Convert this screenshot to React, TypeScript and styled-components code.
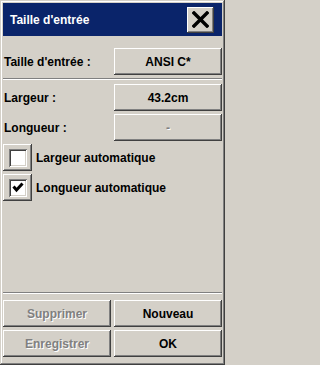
import React, { useState } from "react";
import styled, { createGlobalStyle, css } from "styled-components";

const GlobalStyle = createGlobalStyle`
  html, body {
    margin: 0;
    padding: 0;
    background: #d4d0c8;
  }
  * {
    box-sizing: border-box;
  }
`;

const raised = css`
  background: #d4d0c8;
  box-shadow: inset -1px -1px #404040, inset 1px 1px #ffffff,
    inset -2px -2px #808080, inset 2px 2px #d4d0c8;
`;

const StyleWindow = styled.div`
  width: 225px;
  height: 365px;
  padding: 3px;
  display: flex;
  flex-direction: column;
  background: #d4d0c8;
  box-shadow: inset -1px -1px #404040, inset 1px 1px #d4d0c8,
    inset -2px -2px #808080, inset 2px 2px #ffffff;
  font-family: "Liberation Sans", Arial, sans-serif;
  font-weight: bold;
  font-size: 12px;
  color: #000;
`;

const StyleTitleBar = styled.div`
  height: 33px;
  flex: none;
  display: flex;
  align-items: center;
  justify-content: space-between;
  padding: 0 8px 0 7px;
  background: #0a246a;
  color: #ffffff;
  font-size: 12px;
`;

const StyleCloseButton = styled.button`
  ${raised};
  width: 27px;
  height: 26px;
  border: none;
  padding: 0;
  display: flex;
  align-items: center;
  justify-content: center;
  cursor: pointer;
`;

const StyleBody = styled.div`
  flex: 1;
  display: flex;
  flex-direction: column;
  padding: 12px 0 5px 0;
`;

const StyleRow = styled.div`
  display: grid;
  grid-template-columns: 1fr 1fr;
  column-gap: 3px;
  align-items: center;
  height: 27px;
  & + & {
    margin-top: 3px;
  }
`;

const StyleLabel = styled.span`
  padding-left: 1px;
  white-space: nowrap;
`;

const StyleButton = styled.button<{ $disabled?: boolean }>`
  ${raised};
  height: 27px;
  border: none;
  padding: 0;
  font-family: inherit;
  font-weight: bold;
  font-size: 12px;
  color: ${(p) => (p.$disabled ? "#808080" : "#000")};
  text-shadow: ${(p) => (p.$disabled ? "1px 1px 0 #ffffff" : "none")};
  cursor: ${(p) => (p.$disabled ? "default" : "pointer")};
`;

const StyleSeparator = styled.hr<{ $top: number; $bottom: number }>`
  width: 100%;
  height: 2px;
  border: none;
  margin: ${(p) => p.$top}px 0 ${(p) => p.$bottom}px 0;
  border-top: 1px solid #808080;
  border-bottom: 1px solid #ffffff;
`;

const StyleCheckRow = styled.label`
  display: flex;
  align-items: center;
  gap: 4px;
  height: 27px;
  margin-top: 3px;
  cursor: pointer;
`;

const StyleCheckFrame = styled.span`
  ${raised};
  width: 29px;
  height: 27px;
  display: flex;
  align-items: center;
  justify-content: center;
`;

const StyleCheckBox = styled.span`
  width: 18px;
  height: 18px;
  background: #ffffff;
  display: flex;
  align-items: center;
  justify-content: center;
  box-shadow: inset 1px 1px #808080, inset -1px -1px #ffffff,
    inset 2px 2px #404040, inset -2px -2px #d4d0c8;
`;

const StyleSpacer = styled.div`
  flex: 1;
`;

const StyleFooter = styled.div`
  display: grid;
  grid-template-columns: 1fr 1fr;
  gap: 3px;
`;

function CheckOption({ label, checked, onToggle }: { label: string; checked: boolean; onToggle: () => void }) {
  return (
    <StyleCheckRow onClick={onToggle}>
      <StyleCheckFrame>
        <StyleCheckBox>
          {checked && (
            <svg width="12" height="11" viewBox="0 0 12 11">
              <path d="M1.5 4.5 L4.5 8 L10.5 1.5" fill="none" stroke="#000" strokeWidth="3" />
            </svg>
          )}
        </StyleCheckBox>
      </StyleCheckFrame>
      <span>{label}</span>
    </StyleCheckRow>
  );
}

export default function App() {
  const [autoWidth, setAutoWidth] = useState(false);
  const [autoLength, setAutoLength] = useState(true);

  return (
    <>
      <GlobalStyle />
      <StyleWindow>
        <StyleTitleBar>
          <span>Taille d'entrée</span>
          <StyleCloseButton aria-label="Fermer">
            <svg width="17" height="17" viewBox="0 0 17 17">
              <path d="M2 2 L15 15 M15 2 L2 15" stroke="#000" strokeWidth="3.4" strokeLinecap="square" />
            </svg>
          </StyleCloseButton>
        </StyleTitleBar>
        <StyleBody>
          <StyleRow>
            <StyleLabel>Taille d'entrée :</StyleLabel>
            <StyleButton>ANSI C*</StyleButton>
          </StyleRow>
          <StyleSeparator $top={3} $bottom={4} />
          <StyleRow>
            <StyleLabel>Largeur :</StyleLabel>
            <StyleButton>43.2cm</StyleButton>
          </StyleRow>
          <StyleRow>
            <StyleLabel>Longueur :</StyleLabel>
            <StyleButton $disabled>-</StyleButton>
          </StyleRow>
          <CheckOption label="Largeur automatique" checked={autoWidth} onToggle={() => setAutoWidth((v) => !v)} />
          <CheckOption label="Longueur automatique" checked={autoLength} onToggle={() => setAutoLength((v) => !v)} />
          <StyleSpacer />
          <StyleSeparator $top={0} $bottom={6} />
          <StyleFooter>
            <StyleButton $disabled>Supprimer</StyleButton>
            <StyleButton>Nouveau</StyleButton>
            <StyleButton $disabled>Enregistrer</StyleButton>
            <StyleButton>OK</StyleButton>
          </StyleFooter>
        </StyleBody>
      </StyleWindow>
    </>
  );
}
